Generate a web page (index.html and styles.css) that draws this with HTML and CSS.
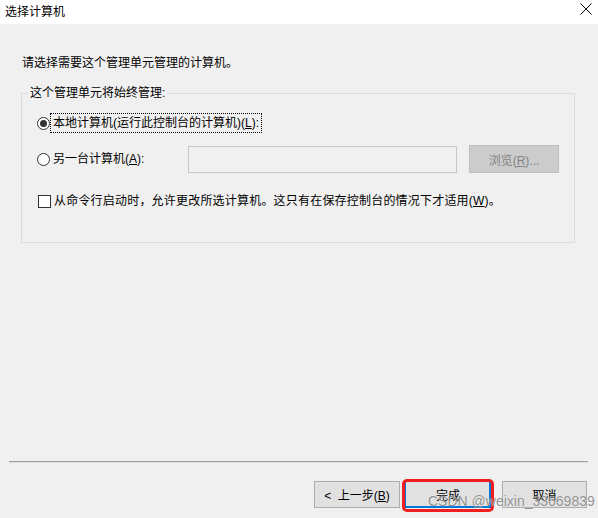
FILE: index.html
```html
<!DOCTYPE html>
<html lang="zh">
<head>
    <meta charset="UTF-8">
    <title>选择计算机</title>
    <link rel="stylesheet" href="styles.css">
</head>
<body>

    <div class="window">
        <div class="titlebar">
            <span class="title">选择计算机</span>
            <svg class="close" width="12" height="12" viewBox="0 0 12 12">
                <path d="M0.5 0.5 L11.5 11.5 M11.5 0.5 L0.5 11.5" stroke="#000" stroke-width="1" fill="none"/>
            </svg>
        </div>

        <div class="content">
            <p class="intro">请选择需要这个管理单元管理的计算机。</p>

            <fieldset class="group">
                <legend>这个管理单元将始终管理:</legend>

                <div class="row row-local">
                    <span class="radio checked"></span>
                    <span class="label focus">本地计算机(运行此控制台的计算机)(<u>L</u>):</span>
                </div>

                <div class="row row-other">
                    <span class="radio"></span>
                    <span class="label fixed">另一台计算机(<u>A</u>):</span>
                    <div class="textbox"></div>
                    <button class="btn browse" disabled>浏览(<u>R</u>)...</button>
                </div>

                <div class="row row-check">
                    <span class="checkbox"></span>
                    <span class="label wide">从命令行启动时，允许更改所选计算机。这只有在保存控制台的情况下才适用(<u>W</u>)。</span>
                </div>
            </fieldset>

            <div class="footer">
                <div class="separator"></div>
                <div class="buttons">
                    <button class="btn">&lt;&nbsp; 上一步(<u>B</u>)</button>
                    <button class="btn default marked">完成</button>
                    <button class="btn cancel">取消</button>
                </div>
            </div>
        </div>

        <div class="watermark">CSDN @weixin_33669839</div>
    </div>

</body>
</html>
```

FILE: styles.css
```css
body {
    margin: 0;
    padding: 0;
    font-family: "Liberation Sans", "Noto Sans CJK SC", sans-serif;
    font-size: 12px;
    color: #000;
    background: #f0f0f0;
}
.window {
    position: relative;
    width: 598px;
    height: 518px;
    overflow: hidden;
}
.titlebar {
    height: 24px;
    background: #fff;
    display: flex;
    align-items: center;
    justify-content: space-between;
    padding: 0 6px 0 5px;
}
.title {
    font-size: 12px;
    line-height: 16px;
}
.close {
    margin-top: -6px;
}
.content {
    height: 494px;
    display: flex;
    flex-direction: column;
    background: #f0f0f0;
}
.intro {
    margin: 31px 0 0 22px;
    line-height: 16px;
}
.group {
    margin: 14px 0 0 21px;
    width: 552px;
    padding: 0 0 31px 0;
    border: 1px solid #dcdcdc;
    box-sizing: content-box;
}
.group legend {
    margin-left: 6px;
    padding: 0 2px;
    line-height: 16px;
}
.row {
    display: flex;
    align-items: center;
    margin-left: 15px;
}
.row-local {
    height: 20px;
    margin-top: 12px;
}
.row-other {
    height: 28px;
    margin-top: 12px;
}
.row-check {
    height: 20px;
    margin-top: 18px;
    margin-left: 16px;
}
.radio {
    width: 11px;
    height: 11px;
    border: 1px solid #333;
    border-radius: 50%;
    background: #fff;
    position: relative;
    flex: none;
}
.radio.checked::after {
    content: "";
    position: absolute;
    left: 2px;
    top: 2px;
    width: 7px;
    height: 7px;
    border-radius: 50%;
    background: #333;
}
.label {
    margin-left: 3px;
    line-height: 16px;
    white-space: nowrap;
}
.label.focus {
    outline: 1px dotted #000;
    outline-offset: 1px;
    padding: 0 1px;
    margin-left: 2px;
}
.label.fixed {
    width: 135px;
}
.label.wide {
    letter-spacing: 0.2px;
}
.textbox {
    width: 267px;
    height: 25px;
    border: 1px solid #c6c6c6;
    background: #f0f0f0;
}
.checkbox {
    width: 11px;
    height: 11px;
    border: 1px solid #333;
    background: #fff;
    flex: none;
}
.btn {
    font-family: inherit;
    font-size: 12px;
    width: 86px;
    height: 27px;
    padding: 0;
    border: 1px solid #adadad;
    background: #e1e1e1;
    color: #000;
}
.browse {
    width: 90px;
    height: 28px;
    margin-left: 12px;
    background: #cccccc;
    border-color: #bfbfbf;
    color: #838383;
}
.footer {
    margin-top: auto;
    padding-bottom: 10px;
}
.separator {
    margin: 0 10px 0 9px;
    height: 1px;
    background: #a0a0a0;
    border-bottom: 1px solid #e0e0e0;
}
.buttons {
    display: flex;
    margin-top: 18px;
    padding-left: 314px;
}
.btn + .btn {
    margin-left: 5px;
}
.btn.cancel {
    margin-left: 11px;
    width: 85px;
}
.default {
    position: relative;
    border: 1px solid #0078d7;
    box-shadow: inset -1px -1px 0 #0078d7;
}
.marked::after {
    content: "";
    position: absolute;
    left: -4px;
    top: -3px;
    right: -4px;
    bottom: -5px;
    border: 3px solid #f01e1e;
    border-radius: 5px;
}
.watermark {
    position: absolute;
    left: 428px;
    top: 493px;
    font-family: "Liberation Sans", Arial, sans-serif;
    font-size: 14px;
    color: rgba(110, 110, 110, 0.75);
    text-shadow: 0 0 1px rgba(255, 255, 255, 0.8);
    white-space: nowrap;
}
```
